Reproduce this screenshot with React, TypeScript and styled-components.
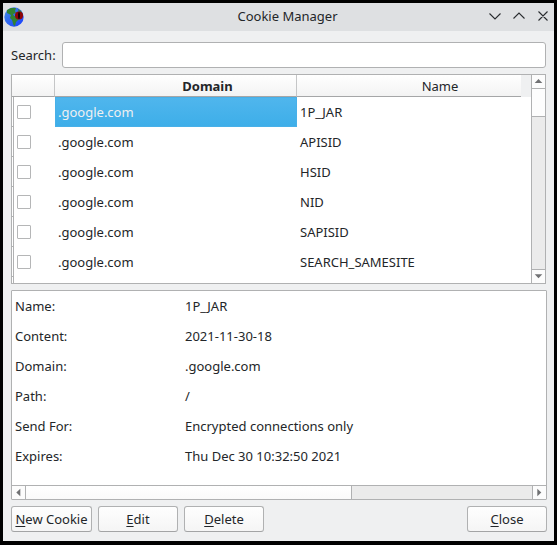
import React from "react";
import styled, { createGlobalStyle, css } from "styled-components";

const Global = createGlobalStyle`
  * { box-sizing: border-box; }
  html, body { margin: 0; background: #fff; }
  body { font: 13px/20px "Noto Sans", sans-serif; color: #232629; overflow: hidden; }
`;
const LINE = "#b0b1b2";

const Window = styled.div`
  width: 557px;
  height: 545px;
  border: 3px solid #000;
  border-bottom-width: 4px;
  background: #eff0f1;
  display: flex;
  flex-direction: column;
`;
const TitleBar = styled.header`
  height: 28px;
  flex: none;
  background: #dee0e2;
  display: grid;
  grid-template-columns: 68px 1fr 68px;
  align-items: center;
`;
const Title = styled.div`
  text-align: center;
  padding: 0 0 2px 18px;
`;
const AppIcon = styled.svg`
  width: 22px;
  height: 22px;
  display: block;
  margin-bottom: 2px;
`;
const WindowControls = styled.svg`
  width: 68px;
  height: 28px;
  display: block;
`;
const Content = styled.main`
  flex: 1;
  display: flex;
  flex-direction: column;
  padding: 11px 7px 0 8px;
`;
const SearchRow = styled.label`
  display: flex;
  align-items: center;
  height: 26px;
  margin: 0 1px 6px 0;
`;
const SearchText = styled.span`
  width: 51px;
  flex: none;
`;
const SearchInput = styled.input`
  flex: 1;
  min-width: 0;
  height: 26px;
  border: 1px solid ${LINE};
  border-radius: 3px;
  background: #fff;
  padding: 0 5px;
  font: inherit;
  outline: none;
`;
const Table = styled.section`
  height: 210px;
  flex: none;
  margin-right: 1px;
  border: 1px solid ${LINE};
  background: #fff;
  display: flex;
`;
const TableBody = styled.div`
  flex: 1;
  overflow: hidden;
`;
const HeaderRow = styled.div`
  height: 22px;
  display: grid;
  grid-template-columns: 43px 242px 224px 1fr;
  grid-template-rows: 22px;
  background: #eff0f1;
`;
const HeaderCell = styled.div<{ $sorted?: boolean; $last?: boolean; $indent?: number }>`
  background: linear-gradient(#fff, #f3f3f3);
  border-bottom: 1px solid #a5a6a7;
  border-right: ${(p) => (p.$last ? "none" : "1px solid #c5c6c7")};
  text-align: center;
  line-height: 22px;
  padding-left: ${(p) => p.$indent ?? 0}px;
  font-weight: ${(p) => (p.$sorted ? 700 : 400)};
`;
const Rows = styled.div`
  height: 186px;
  overflow: hidden;
`;
const Row = styled.div`
  height: 30px;
  display: grid;
  grid-template-columns: 1px 42px 242px 1fr;
`;
const RowTick = styled.div`
  border-bottom: 1px solid ${LINE};
`;
const CheckCell = styled.div`
  border-left: 1px solid ${LINE};
  padding: 8px 0 0 3px;
`;
const Check = styled.span`
  display: block;
  width: 14px;
  height: 14px;
  border: 1px solid #b5b6b7;
  border-radius: 1px;
  background: #fff;
`;
const Cell = styled.div<{ $selected?: boolean }>`
  padding: 5px 3px;
  white-space: nowrap;
  ${(p) => p.$selected && css`
    color: #eff0f1;
    background: linear-gradient(#50b6ed, #3daee9);
    box-shadow: inset 0 0 0 1px #48b0e8;
  `}
`;
const RowTail = styled.div`
  height: 6px;
  width: 2px;
  border-right: 1px solid ${LINE};
`;
const ScrollBar = styled.div<{ $horizontal?: boolean }>`
  flex: none;
  display: flex;
  background: #ebebeb;
  ${(p) => p.$horizontal
    ? css`height: 14px; border-top: 1px solid ${LINE};`
    : css`width: 14px; flex-direction: column; border-left: 1px solid ${LINE};`}
`;
const Arrow = styled.svg`
  width: 13px;
  height: 13px;
  flex: none;
  background: #fcfcfc;
  display: block;
`;
const Thumb = styled.div<{ $horizontal?: boolean }>`
  flex: none;
  background: #fdfdfd;
  border: 0 solid ${LINE};
  ${(p) => p.$horizontal
    ? css`width: 327px; border-width: 0 1px; background: linear-gradient(#fff, #fafafa);`
    : css`height: 29px; border-width: 1px 0;`}
`;
const Track = styled.div<{ $horizontal?: boolean }>`
  flex: 1;
  border: 0 solid ${LINE};
  ${(p) => (p.$horizontal ? css`border-right-width: 1px;` : css`border-bottom-width: 1px;`)}
`;
const Details = styled.section`
  height: 210px;
  flex: none;
  margin-top: 6px;
  border: 1px solid ${LINE};
  border-radius: 1px;
  background: #fff;
  display: flex;
  flex-direction: column;
`;
const Fields = styled.dl`
  flex: 1;
  margin: 0;
  padding: 0 3px;
  display: grid;
  grid-template-columns: 170px 1fr;
  grid-auto-rows: 30px;
  line-height: 30px;
`;
const Field = styled.dt``;
const Value = styled.dd`
  margin: 0;
  white-space: nowrap;
`;
const Actions = styled.footer`
  display: flex;
  gap: 6px;
  margin-top: 6px;
`;
const Button = styled.button<{ $wide?: boolean; $end?: boolean }>`
  width: ${(p) => (p.$wide ? 81 : 80)}px;
  height: 26px;
  padding: 0;
  border: 1px solid ${LINE};
  border-bottom-color: #a3a4a5;
  border-radius: 3px;
  background: linear-gradient(#fefefe, #f5f5f5);
  color: inherit;
  font: inherit;
  white-space: nowrap;
  margin-left: ${(p) => (p.$end ? "auto" : "0")};
`;
const Key = styled.span`
  text-decoration: underline 1px #232629;
  text-underline-offset: 2px;
  text-decoration-skip-ink: none;
`;

const cookies = ["1P_JAR", "APISID", "HSID", "NID", "SAPISID", "SEARCH_SAMESITE"];
const details = [
  ["Name:", "1P_JAR"],
  ["Content:", "2021-11-30-18"],
  ["Domain:", ".google.com"],
  ["Path:", "/"],
  ["Send For:", "Encrypted connections only"],
  ["Expires:", "Thu Dec 30 10:32:50 2021"],
];
const arrows = {
  up: "M2.7 8 6.5 4 10.3 8Z",
  down: "M2.7 4.3 6.5 8.3 10.3 4.3Z",
  left: "M8.3 2.7 4.3 6.5 8.3 10.3Z",
  right: "M4.3 2.7 8.3 6.5 4.3 10.3Z",
};
const ScrollArrow = ({ dir }: { dir: keyof typeof arrows }) => (
  <Arrow viewBox="0 0 13 13"><path d={arrows[dir]} fill="#707173" /></Arrow>
);

const Globe = () => (
  <AppIcon viewBox="0 0 22 22">
    <defs>
      <linearGradient id="sea" x1="0" y1="0" x2="1" y2="1">
        <stop offset="0" stopColor="#4590e2" />
        <stop offset="1" stopColor="#173cff" />
      </linearGradient>
    </defs>
    <circle cx="11" cy="12" r="9.7" fill="url(#sea)" />
    <path d="M4 5 8 3 13 3 12 6 13 8 10 9 11 11 15 12 16 14 13 17 12 21 10.5 20 9 15 7 13 8 10 4 8Z" fill="#328332" />
    <path d="M15 4 18 6 20 10 16 9Z" fill="#328332" />
    <circle cx="16" cy="10.5" r="4" fill="#8e0508" />
    <ellipse cx="16" cy="10.5" rx="1" ry="3.6" fill="#170407" />
  </AppIcon>
);

export default function App() {
  return (
    <>
      <Global />
      <Window>
        <TitleBar>
          <Globe />
          <Title>Cookie Manager</Title>
          <WindowControls viewBox="0 0 68 28" fill="none" stroke="#292c2f" strokeWidth="1.1">
            <path d="m3.5 10.5 5.5 5.5 5.5-5.5M27.5 15.5 33 10l5.5 5.5M52.5 8.5l9 9M61.5 8.5l-9 9" />
          </WindowControls>
        </TitleBar>
        <Content>
          <SearchRow>
            <SearchText>Search:</SearchText>
            <SearchInput />
          </SearchRow>
          <Table>
            <TableBody>
              <HeaderRow>
                <HeaderCell />
                <HeaderCell $sorted $indent={64}>Domain</HeaderCell>
                <HeaderCell $last $indent={62}>Name</HeaderCell>
              </HeaderRow>
              <Rows>
                {cookies.map((name, i) => (
                  <Row key={name}>
                    <RowTick />
                    <CheckCell><Check /></CheckCell>
                    <Cell $selected={i === 0}>.google.com</Cell>
                    <Cell>{name}</Cell>
                  </Row>
                ))}
                <RowTail />
              </Rows>
            </TableBody>
            <ScrollBar>
              <ScrollArrow dir="up" />
              <Thumb />
              <Track />
              <ScrollArrow dir="down" />
            </ScrollBar>
          </Table>
          <Details>
            <Fields>
              {details.map(([field, value]) => (
                <React.Fragment key={field}>
                  <Field>{field}</Field>
                  <Value>{value}</Value>
                </React.Fragment>
              ))}
            </Fields>
            <ScrollBar $horizontal>
              <ScrollArrow dir="left" />
              <Thumb $horizontal />
              <Track $horizontal />
              <ScrollArrow dir="right" />
            </ScrollBar>
          </Details>
          <Actions>
            <Button $wide><Key>N</Key>ew Cookie</Button>
            <Button><Key>E</Key>dit</Button>
            <Button><Key>D</Key>elete</Button>
            <Button $end><Key>C</Key>lose</Button>
          </Actions>
        </Content>
      </Window>
    </>
  );
}
